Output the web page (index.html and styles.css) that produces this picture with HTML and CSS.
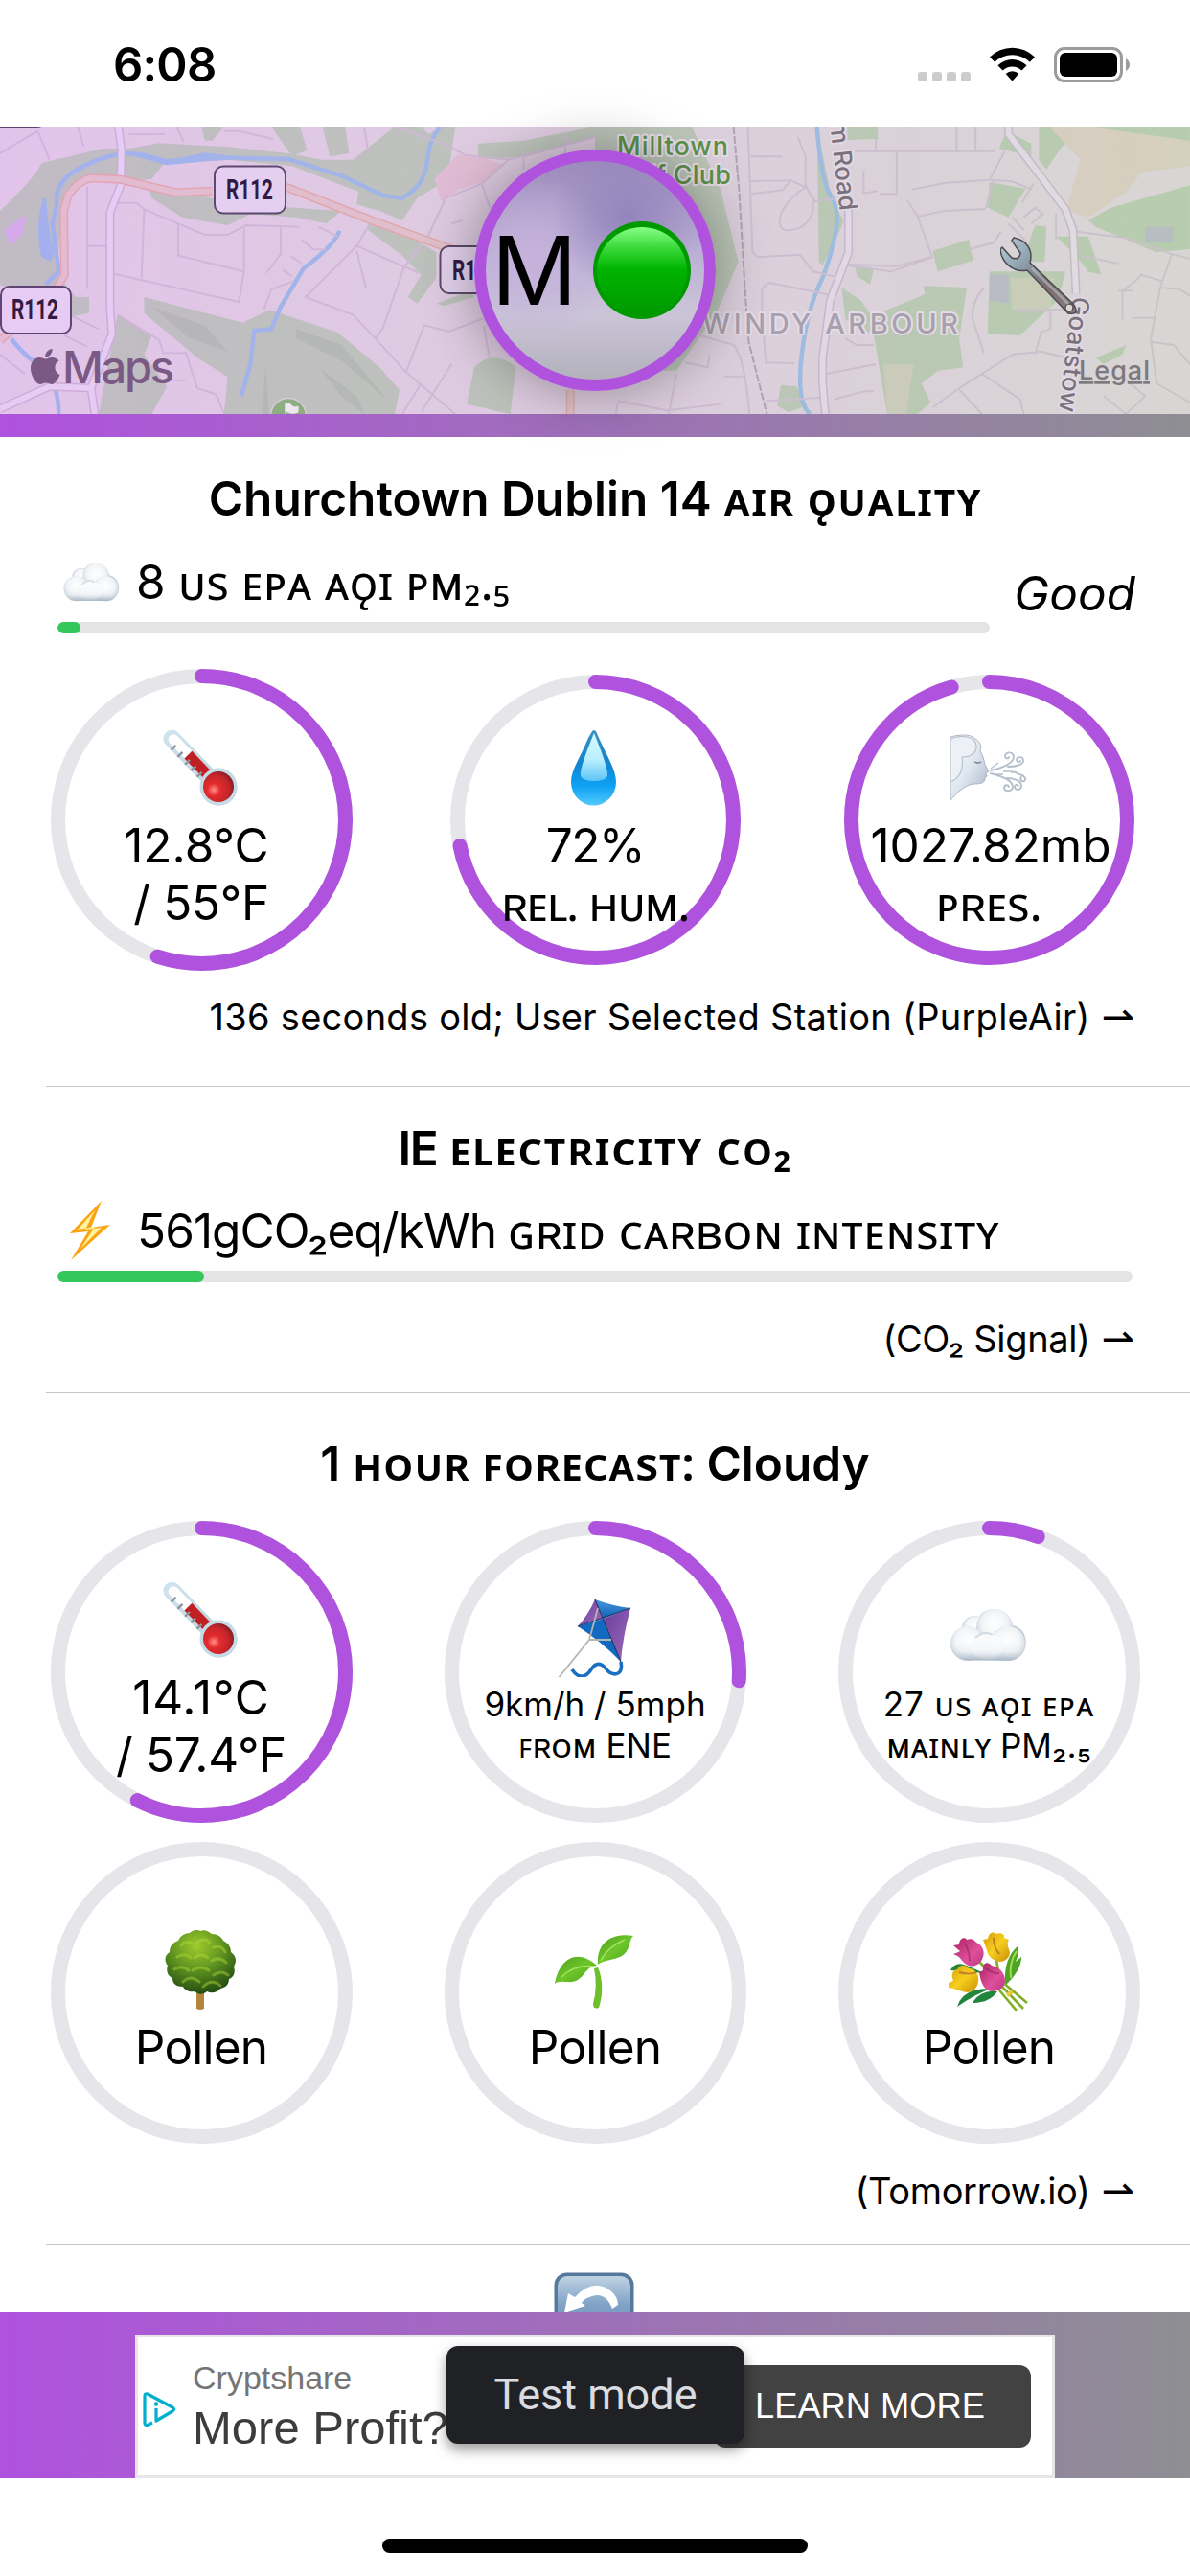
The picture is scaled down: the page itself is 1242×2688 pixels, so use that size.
FILE: index.html
```html
<!DOCTYPE html>
<html lang="en">
<head>
<meta charset="utf-8">
<title>Air Quality</title>
<link rel="stylesheet" href="styles.css">
</head>
<body>
<svg class="defs" width="0" height="0" aria-hidden="true">
  <defs>
    <radialGradient id="bulb" cx=".35" cy=".6" r=".7"><stop offset="0" stop-color="#ff8f8a"/><stop offset=".3" stop-color="#e32a2c"/><stop offset=".7" stop-color="#c4262b"/><stop offset="1" stop-color="#7c1d22"/></radialGradient>
    <linearGradient id="glass" x1="0" y1="0" x2="0" y2="1"><stop offset="0" stop-color="#cfe4ee"/><stop offset="1" stop-color="#b9ced8"/></linearGradient>
    <linearGradient id="dropOuter" x1="0" y1="0" x2="0" y2="1"><stop offset="0" stop-color="#3c93c4"/><stop offset=".45" stop-color="#1183cf"/><stop offset=".75" stop-color="#0fa3f5"/><stop offset="1" stop-color="#55c8fb"/></linearGradient>
    <linearGradient id="dropInner" x1="0" y1="0" x2="0" y2="1"><stop offset="0" stop-color="#d8fbff"/><stop offset=".55" stop-color="#b9effe"/><stop offset="1" stop-color="#5cc4f8"/></linearGradient>
    <radialGradient id="puff" cx=".5" cy=".4" r=".6"><stop offset="0" stop-color="#ffffff"/><stop offset=".6" stop-color="#f1f4f7"/><stop offset="1" stop-color="#becad5"/></radialGradient>
    <linearGradient id="cloudBase" x1="0" y1="0" x2="0" y2="1"><stop offset="0" stop-color="#ffffff" stop-opacity="0"/><stop offset=".6" stop-color="#e6ebf0" stop-opacity=".3"/><stop offset="1" stop-color="#a9b8c5"/></linearGradient>
    <linearGradient id="leaf" x1="0" y1="0" x2="1" y2="1"><stop offset="0" stop-color="#4f9e1c"/><stop offset=".5" stop-color="#6cc62a"/><stop offset="1" stop-color="#4c9c1a"/></linearGradient>
    <radialGradient id="crown" cx=".45" cy=".25" r=".75"><stop offset="0" stop-color="#9fcb2c"/><stop offset=".5" stop-color="#5f9320"/><stop offset="1" stop-color="#234d12"/></radialGradient>
    <linearGradient id="kiteBlue" x1="0" y1="0" x2="0" y2="1"><stop offset="0" stop-color="#4a97dc"/><stop offset="1" stop-color="#0c62b8"/></linearGradient>
    <linearGradient id="kitePurple" x1="0" y1="0" x2="1" y2="1"><stop offset="0" stop-color="#6a3d98"/><stop offset="1" stop-color="#9c6cc0"/></linearGradient>
    <linearGradient id="bolt" x1="0" y1="0" x2="1" y2="1"><stop offset="0" stop-color="#ff9f0a"/><stop offset="1" stop-color="#f7a81b"/></linearGradient>
    <linearGradient id="rosePink" x1="0" y1="0" x2="1" y2="1"><stop offset="0" stop-color="#a5245f"/><stop offset=".6" stop-color="#e04f9c"/><stop offset="1" stop-color="#b43a80"/></linearGradient>
    <linearGradient id="roseGold" x1="0" y1="0" x2="1" y2="1"><stop offset="0" stop-color="#d79a08"/><stop offset=".5" stop-color="#f6cf1d"/><stop offset="1" stop-color="#c98e09"/></linearGradient>
    <linearGradient id="face" x1="0" y1="0" x2="1" y2="1"><stop offset="0" stop-color="#ffffff"/><stop offset=".5" stop-color="#dfe6ef"/><stop offset="1" stop-color="#a3b0c0"/></linearGradient>
    <linearGradient id="refreshTile" x1="0" y1="0" x2="0" y2="1"><stop offset="0" stop-color="#bfd2e3"/><stop offset=".4" stop-color="#7fa2c6"/><stop offset="1" stop-color="#6488b0"/></linearGradient>
    <linearGradient id="ledBody" x1="0" y1="0" x2="0" y2="1"><stop offset="0" stop-color="#86ff86"/><stop offset=".22" stop-color="#3fdc3f"/><stop offset=".48" stop-color="#00b400"/><stop offset="1" stop-color="#009800"/></linearGradient>
    <linearGradient id="steel" x1="0" y1="0" x2="1" y2="1"><stop offset="0" stop-color="#b9d0dd"/><stop offset=".3" stop-color="#8fa3b0"/><stop offset=".6" stop-color="#7a6a6c"/><stop offset="1" stop-color="#8d7f82"/></linearGradient>
    <symbol id="thermometer" viewBox="0 0 84 80">
      <g transform="rotate(-44 61 60)">
        <path d="M53 45V-9a9 9 0 0 1 18 0V45a19 19 0 1 1-18 0z" transform="translate(-1 -1)" fill="url(#glass)"/>
        <path d="M56 44V-8a5 5 0 0 1 11 0V44z" fill="#fff"/>
        <rect x="56" y="14" width="11" height="34" fill="#c01f24"/>
        <path d="M52-2h7M52 8h7M52 19h7M52 28h7M52 37h7" stroke="#8d9499" stroke-width="2.400"/>
      </g>
      <circle cx="61" cy="60" r="19.500" fill="#c5dbe6"/>
      <circle cx="61" cy="60" r="16" fill="url(#bulb)"/>
    </symbol>
    <symbol id="drop" viewBox="0 0 84 80">
      <path d="M42 1c2 0 3 3 5 8 8 18 18 33 18 46a23 24 0 0 1-47 0c0-13 11-28 18-46 3-5 4-8 6-8z" fill="url(#dropOuter)"/>
      <path d="M42 4c4 10 15 36 14 44-1 8-27 8-28 0-1-8 10-34 14-44z" fill="url(#dropInner)"/>
    </symbol>
    <symbol id="cloud" viewBox="0 0 82 56">
      <path d="M21 54a20 18 0 0 1-7-34c1-9 10-14 18-11C38-2 62-3 67 18c20 4 18 36-4 37z" fill="#c3ced8"/>
      <circle cx="28" cy="22" r="13.500" fill="url(#puff)"/>
      <circle cx="48" cy="20" r="19" fill="url(#puff)"/>
      <circle cx="20" cy="37" r="18" fill="url(#puff)"/>
      <circle cx="62" cy="37" r="18" fill="url(#puff)"/>
      <ellipse cx="40" cy="40" rx="17" ry="14" fill="#f8fafb"/>
      <path d="M28 31q9-8 18-3" fill="none" stroke="#d3dbe2" stroke-width="2"/>
      <path d="M3 30Q2 54 21 54.500h42Q80 54 80 30z" fill="url(#cloudBase)"/>
    </symbol>
    <symbol id="wind" viewBox="0 0 84 80">
      <path d="M3 8c8-2 20-4 26 2 7 4 6 10 5 13 3 4 4 9 5 14l4 7-3 2 1 3-2 2c0 5-4 6-12 6-9 1-18 10-24 17z" fill="url(#face)" stroke="#aab6c4" stroke-width="1"/>
      <path d="M3 10c12-5 28-3 27 10-2 9-11 9-15 9 2 12-2 22-12 26z" fill="#edf1f6" stroke="#b6c1cf" stroke-width="1.200"/>
      <path d="M28 34q4 2 7 0" stroke="#8290a2" stroke-width="1.800" fill="none"/>
      <path d="M45 43c10-2 24-7 24-14 0-6-9-6-9-1 0 3 4 3 4 1M63 39c8 0 16-2 16-6 0-5-7-5-7-1 0 2 3 3 4 1M45 46c12 3 23 7 23 14 0 5-9 6-9 1 0-3 4-4 5-1M62 51c8 0 15 3 15 8 0 5-7 5-7 1 0-2 3-3 4-1M67 45c2-2 5 1 8 2 5 1 8 5 5 7-3 1-5-2-3-4" fill="none" stroke="#b6c0cd" stroke-width="1.900" stroke-linecap="round"/>
      <path d="M45 41l8-6M58 44h9M51 47l7 0" stroke="#b6c0cd" stroke-width="1.400"/>
    </symbol>
    <symbol id="kite" viewBox="0 0 84 82">
      <path d="M43 1Q62 8 80 10L52 21z" fill="url(#kiteBlue)"/>
      <path d="M43 1Q36 17 25 29L52 21z" fill="url(#kitePurple)"/>
      <path d="M25 29Q50 45 70 66L52 21z" fill="#1169c0"/>
      <path d="M80 10Q72 40 70 66L52 21z" fill="url(#kitePurple)"/>
      <path d="M43 1L70 66M25 29L80 10" stroke="#233a6b" stroke-width="1.200"/>
      <path d="M46 10L37 43h23M37 43L4 84" stroke="#b5b5b5" stroke-width="1.800" fill="none"/>
      <path d="M19 74c7 11 15 8 20 0s11-7 16 0 18 8 15-8" stroke="#1b6fc2" stroke-width="3.600" fill="none"/>
    </symbol>
    <symbol id="tree" viewBox="0 0 84 84">
      <path d="M38 66h8v16q-4 2-8 0z" fill="#b5843c"/>
      <path d="M42 1c5-2 9 1 12 3 6 0 10 3 12 7 6 3 8 7 8 12 6 4 6 10 3 15 2 6 0 11-5 13 0 6-4 9-9 10-4 5-10 5-14 3-4 4-10 3-13 0-5 1-10-1-12-5-7 0-11-3-11-9-5-2-7-8-5-13-4-5-3-11 2-14 0-6 3-10 9-12 2-5 7-8 12-8 3-3 8-4 11-2z" fill="url(#crown)"/>
      <path d="M22 16q5-6 12-2M38 13q8-6 14 0M56 18q8-3 12 5M18 28q8-5 14 1M36 29q7-6 14 0M54 32q8-5 15 2M15 41q8-5 15 1M34 42q8-6 17 0M56 47q8-6 15 0M24 54q8-8 17 0M45 59q9-9 18-1" fill="none" stroke="#b1d93a" stroke-opacity=".45" stroke-width="3" stroke-linecap="round"/>
    </symbol>
    <symbol id="sprout" viewBox="0 0 84 84">
      <path d="M42 40q4 18-1 37 0 6 6 4c5-15 4-31-1-42z" fill="#6fbf2c"/>
      <path d="M1 56C5 32 23 17 45 37 30 38 33 56 13 54Q4 53 1 56z" fill="url(#leaf)"/>
      <path d="M46 36C44 14 60 2 83 6 78 10 81 20 71 27 64 31 52 31 46 36z" fill="url(#leaf)"/>
      <path d="M8 49Q22 35 43 38M49 32Q56 18 74 10" stroke="#a4e265" stroke-width="1.500" fill="none"/>
    </symbol>
    <symbol id="bouquet" viewBox="0 0 84 84">
      <path d="M60 58Q58 30 73 17q2 8-2 16 6-5 6-5 0 14-17 30z" fill="#4ca524"/>
      <path d="M66 50Q64 34 72 22" stroke="#a8dc4a" stroke-width="2" fill="none"/>
      <path d="M3 42Q8 32 20 37l18 8zM10 80Q16 60 46 61 30 66 10 80zM26 76Q34 62 52 64 44 76 26 76z" fill="#22853c"/>
      <path d="M50 58l22 26M55 57l24 25M57 54l26 22M50 25l3 18M32 32l6 6" stroke="#7fae24" stroke-width="2.600"/>
      <path d="M6 16l6-1c0-6 6-9 8-5 5-2 8 0 10 3 6 2 9 9 7 15-2 8-11 12-17 8C14 33 15 28 6 25q6-2 7-3z" fill="url(#rosePink)"/>
      <path d="M37 10l5-1c1-7 6-8 9-5 5-2 9 1 8 4l5 2c-3 5 0 9 1 13 0 7-8 12-14 9-6-2-9-6-10-11z" fill="url(#roseGold)"/>
      <path d="M1 55l5-2c-3-6 0-12 4-12 3-6 10-5 12-1 6 0 10 5 10 10 1 9-5 15-12 15-7-1-11-4-19-5z" fill="url(#roseGold)"/>
      <path d="M33 44l4-2c-1-8 5-10 9-5 8 1 14 8 14 16 0 7-7 11-14 11-7-1-11-7-13-20z" fill="url(#rosePink)"/>
      <path d="M18 14q5 8 5 18M48 8q0 10 6 17M12 44q10 3 18 0M40 40q8 6 14 5" stroke="#7b1a45" stroke-opacity=".4" stroke-width="2" fill="none"/>
      <path d="M62 68l6-4" stroke="#e6c83b" stroke-width="4"/>
    </symbol>
  </defs>
</svg>

<div class="phone">
  <div class="status">
    <span class="clock">6:08</span>
    <div class="indicators">
      <span class="dots"><i></i><i></i><i></i><i></i></span>
      <svg class="wifi" viewBox="0 0 47 36"><path d="M0 10.500a33.500 33.500 0 0 1 47 0l-5.200 5.300a26 26 0 0 0-36.600 0z"/><path d="M8.400 19.200a21.600 21.600 0 0 1 30.200 0l-5.200 5.300a14.200 14.200 0 0 0-19.800 0z"/><path d="M16.700 28a9.600 9.600 0 0 1 13.600 0l-6.800 7.500z"/></svg>
      <span class="battery"><b></b></span>
      <svg class="nub" viewBox="0 0 4 13"><path d="M0 0q4 2.500 4 6.500T0 13z"/></svg>
    </div>
  </div>

  <header class="hero">
    <svg class="map" viewBox="0 0 1242 300">
      <defs>
        <linearGradient id="tint" x1="0" y1="0" x2="1" y2="0"><stop offset="0" stop-color="#af52de"/><stop offset="1" stop-color="#8e8e93"/></linearGradient>
      </defs>
      <rect width="1242" height="300" fill="#f8f5ef"/>
      <g transform="scale(.396 .33333) translate(0 -396)" class="geo">
        <path class="park" d="M0 660Q90 560 110 510L270 465H340L420 448 600 460 760 480 850 500 930 500 1040 396H1110L1130 420 1160 396H1200L1180 560 1100 620 1060 690 1000 660 940 640 945 600 770 520 600 500 430 515 400 560 320 570 230 560 190 600 160 700 150 860 200 930 235 930 235 980 150 1000 0 890zM530 396H590L560 440H540zM715 396H790L810 470 770 490zM850 396H910L920 480 870 490zM390 580L640 640 900 660 860 700 780 680 660 670 600 705 480 680 400 620zM970 700L1080 740 1150 790 1150 870 1100 950 1075 930 1110 860 1060 800 970 720zM380 930L640 1010 710 970 890 1040 1000 1150 1053 1220 1040 1300H590L600 1180 520 1120 380 980zM310 985L400 1050 380 1110 440 1210 400 1296H260zM1250 1150Q1300 1090 1360 1150L1345 1296 1230 1265zM1260 450L1380 440 1568 396V430L1390 490 1260 500zM1150 950L1240 910 1250 930 1170 958z"/>
        <path d="M1145 560l60-75 70 10 50 20-40 50-80 30-40 40z" fill="#fbe0dc"/>
        <path d="M10 720l60-50-10 60-30 40z" fill="#e6cdf0"/>
        <path class="hill" d="M400 960L540 1020 600 1100 500 1060zM780 1030L900 1080 1020 1250 900 1130 780 1060zM840 1150L940 1240 960 1296 900 1240zM700 1150l10 146h-20z"/>
        <path class="water thick" d="M118 620Q95 700 112 800 140 830 138 780 125 740 118 620z"/>
        <path class="water thick" d="M340 480L440 508 540 482 620 494 540 500 440 512z"/>
        <path class="water river" d="M150 640Q140 560 230 515 300 470 380 485L440 505 540 492 760 498 900 550 1010 612 1060 620Q1120 580 1125 510T1160 396M150 640L138 700 155 850 120 890M895 722Q880 770 800 840L740 960 715 1030 670 1035 660 1140 636 1240M30 1060Q60 1110 130 1170 155 1230 155 1296"/>
        <path class="lane" d="M0 480L100 410M100 410l30 90M205 396l15 60M340 420h95M465 396l20 50M590 410h40l90 25M960 400l10 75M230 585V905M230 770h60M305 635h55l20 20 90 45 70 35h60l50-30 140 5M380 655L373 870M470 700V800L643 850V715M300 857L630 945 643 850M740 710V795L702 855M840 710l50 30M795 750l30 30 35 2M765 800l30 25M745 845l25 20M775 880L715 905 695 970M1040 396L1180 455 1225 485 1340 500 1568 430M1340 500L1270 575 1175 620 1130 735 1065 835 1010 1025 990 1060M1270 575L1300 680M980 690L940 770 805 930 930 985 990 1060 1070 1165 1200 1296M940 770L1105 855M940 785l25 120M1118 1018l65 20 110-50M1070 1165L1118 1018M1110 1200l-50 96M1190 1140l-80 150M1290 1120l-15-100M190 990l70 40M0 1110l65 60M170 1050l60 35M310 985l110 80 10 40 60 0 30 110 50 20 20 60M430 1190l60 0M1500 440l-10-10 0 60M1380 470v60M1190 700l30-10"/>
        <path class="road-edge" d="M312 396L320 470 318 580 290 665V960L295 1045 240 1215 130 1210 0 1280M240 1215L250 1296"/>
        <path class="road" d="M312 396L320 470 318 580 290 665V960L295 1045 240 1215 130 1210 0 1280M240 1215L250 1296"/>
        <path class="main-edge" d="M0 1065Q90 980 150 900L170 860 168 660 180 610Q210 560 245 557L318 562 465 603 560 598M753 585L980 690 1190 780M1503 1220V1296"/>
        <path class="main" d="M0 1065Q90 980 150 900L170 860 168 660 180 610Q210 560 245 557L318 562 465 603 560 598M753 585L980 690 1190 780M1503 1220V1296"/>
      </g>
      <g transform="translate(621 0) scale(.396 .33333) translate(0 -396)" class="geo">
        <path class="park" d="M0 396H255L330 590 378 820 320 980 215 1160 150 1160 0 900zM585 396L620 600 635 650 655 690 650 710 600 830 590 820zM665 396H745V435L665 438zM1040 570L1135 590 1090 680 1035 650zM890 785L985 750 997 815 903 850zM685 835L735 840 725 890 690 865zM865 895L980 900 960 1060 970 1150 905 1160 860 1200 885 1260 850 1296H770L735 1050 660 1000 650 900 700 940 730 990 870 920zM490 1205L530 1210 560 1270 510 1290 480 1270zM1170 396H1568V490L1440 430 1300 396 1230 460 1190 530 1170 500zM1085 410L1150 450 1150 490 1065 465zM1390 640L1568 580V780L1480 790 1320 710 1300 690 1360 650zM1160 705L1190 710 1185 820 1150 820 1140 770zM1215 740L1300 740 1335 860 1300 850 1260 790zM1320 1120L1400 1080 1390 1110 1340 1140zM1040 850L1240 850 1220 940 1120 1050 1035 1045z"/>
        <path d="M1200 400L1300 396 1568 440 1568 520 1440 540 1400 600 1300 680 1240 660 1280 500z" fill="#f4ecd0"/>
        <path d="M1040 860H1090V950L1040 940zM1450 710H1525V760H1450z" fill="#c9d3d6"/>
        <path d="M1095 870H1210L1200 970H1100zM760 1140H840L820 1296H770z" fill="#f2eecb" fill-opacity=".6"/>
        <path class="water river" d="M585 396Q595 560 620 610 645 650 635 720T600 870Q560 960 545 1110T567 1296"/>
        <path class="lane" d="M403 396L415 790 430 805 540 797 575 850 630 865M410 490h85M535 430l20 60v90l25 55M410 567l105-2 40 20 25 45 50-8M515 565l-20 30-85 12M555 585Q490 640 487 690T545 710Q580 680 575 635M685 473H1055M740 435v38M953 396v76M1003 396v76M795 473V607h-45M708 535v70l37-7M835 593l85-20 120-10 40-90M1040 563l60 5 50 25M1030 650L1050 563M850 678l70-18 110-6M823 627l27 50 40 130M665 830l115 20 110-45M665 828l130 5 95-30M985 780l65-20 20-35M440 960v-50q5-20 20-25l160 38M440 960l10 175 75 2M260 1045L365 1080Q395 1120 407 1296M237 1135l60 15 5-40M340 1178h50M215 1170l-15 90-5 36M60 1260l-5 36M60 1255l130 30 140-20M450 1255l145-10M610 1170l130-30M660 1060l30 20 45 0M630 1250l80-25 25 0M1125 635l30-60M1100 680l30 40M1130 680l30-30 20 20-30 30M1090 700l50 60M1215 670v80M1115 970h145M1025 900Q990 950 995 1000L1025 1105M1200 970v60l-25 10-15 70M890 1275L960 1215 1100 1110 1175 1100 1280 1130M960 1220l60 76M1020 1170l100 80 10 46M1280 800l100 25M1270 725L1400 745 1520 795 1568 810M1520 795L1490 900 1465 1060 1480 1200 1568 1260M1490 900l50 5 28 20M1390 1000v-90l30-25 20-25 55 20M1380 910h40M1415 995h60M1465 1070l60 10 43 60M1390 1180l60 60-50 56M1340 1240l60 56"/>
        <path class="rail" d="M365 396L380 600 395 900 405 1070 453 1296"/>
        <path class="road-edge" d="M1090 396V420L1180 560 1240 655 1260 720 1268 920M668 640V790L620 940 600 1120V1200L607 1296"/>
        <path class="road" d="M1090 396V420L1180 560 1240 655 1260 720 1268 920M668 640V790L620 940 600 1120V1200L607 1296"/>
      </g>
      <path class="shield" d="M-20 1H36q6 0 7-1"/>
      <g class="badge">
        <rect x="224" y="41.500" width="74" height="49" rx="9"/><rect x="1" y="167" width="73" height="49" rx="9"/><rect x="459.500" y="125" width="74" height="49" rx="9"/>
      </g>
      <rect width="1242" height="300" fill="url(#tint)" fill-opacity=".3"/>
      <circle cx="301" cy="302" r="18.500" fill="#8cae80" stroke="#d9cbdc" stroke-width="1.500"/>
      <path d="M298 289v14M298 290q5-2 7 2 4 2 6 0v6q-6 3-13-1z" fill="#efe6f2" stroke="#efe6f2" stroke-width="1"/>
      <g class="badge-text">
        <text x="236" y="76" textLength="49" lengthAdjust="spacingAndGlyphs">R112</text>
        <text x="12" y="201" textLength="49" lengthAdjust="spacingAndGlyphs">R112</text>
        <text x="472" y="160" textLength="49" lengthAdjust="spacingAndGlyphs">R112</text>
      </g>
      <text class="label park-label" x="644" y="30" textLength="116">Milltown</text>
      <text class="label park-label" x="641" y="60" textLength="122">Golf Club</text>
      <text class="label area" x="733" y="216" textLength="267">WINDY ARBOUR</text>
      <text class="label street" transform="translate(866 -4) rotate(83.500)" textLength="93">m Road</text>
      <text class="label street" transform="translate(1119 177) rotate(96.500)" textLength="121">Goatstow</text>
      <path class="brand" transform="translate(28.500 232) scale(1.560 1.540)" d="M12.152 6.896c-.948 0-2.415-1.078-3.960-1.040-2.040.027-3.910 1.183-4.961 3.014-2.117 3.675-.546 9.103 1.519 12.090 1.013 1.454 2.208 3.090 3.792 3.039 1.520-.065 2.090-.987 3.935-.987 1.831 0 2.350.987 3.960.948 1.637-.026 2.676-1.480 3.676-2.948 1.156-1.688 1.636-3.325 1.662-3.415-.039-.013-3.182-1.221-3.220-4.857-.026-3.040 2.480-4.494 2.597-4.559-1.429-2.090-3.623-2.324-4.390-2.376-2-.156-3.675 1.090-4.610 1.090zM15.530 3.830c.843-1.012 1.400-2.427 1.245-3.830-1.207.052-2.662.805-3.532 1.818-.780.896-1.454 2.338-1.273 3.714 1.338.104 2.715-.688 3.559-1.701"/>
      <text class="brand maps-word" x="65" y="268" textLength="117">Maps</text>
      <text class="legal" x="1126" y="264" textLength="74">Legal</text>
    </svg>
    <div class="stripe"></div>
    <svg class="wrench" viewBox="0 0 82 82"><path d="M2 11l10 11q8 3 9-5L12 4l2-3c12 2 21 12 17 26l45 43q8 12-5 10L28 35C14 38 1 27 0 13z" fill="url(#steel)" stroke="#4c4a50" stroke-width="1.500"/><circle cx="72" cy="74" r="4" fill="#dad7d5" stroke="#5b4d50" stroke-width="1.500"/><path d="M33 33l38 37" stroke="#c2cdd4" stroke-opacity=".5" stroke-width="3"/></svg>
    <div class="avatar">
      <span>M</span>
      <svg class="led" viewBox="0 0 102 102"><circle cx="51" cy="51" r="51" fill="#009a00"/><ellipse cx="51" cy="52" rx="47" ry="46" fill="url(#ledBody)"/></svg>
    </div>
  </header>

  <main class="feed">
    <section class="card air">
      <h2><span>Churchtown Dublin 14</span> <span class="sc wide">ᴀɪʀ ǫᴜᴀʟɪᴛʏ</span></h2>
      <div class="meter-row">
        <div class="meter">
          <p class="reading"><svg class="lead cloud-s"><use href="#cloud"/></svg><span>8</span><span class="sc label-aqi">ᴜs ᴇᴘᴀ ᴀǫɪ ᴘᴍ₂.₅</span></p>
          <div class="track"><i style="width:24px"></i></div>
        </div>
        <em>Good</em>
      </div>
      <div class="gauges">
        <div class="gauge">
          <svg class="dial" viewBox="0 0 315 315"><circle cx="157.500" cy="157.500" r="150"/><circle class="arc" cx="157.500" cy="157.500" r="150" pathLength="100" stroke-dasharray="55 100"/></svg>
          <svg class="emoji"><use href="#thermometer"/></svg>
          <p class="nudge">12.8°C</p><p class="snug">/ 55°F</p>
        </div>
        <div class="gauge">
          <svg class="dial" viewBox="0 0 315 315"><circle cx="157.500" cy="157.500" r="144"/><circle class="arc" cx="157.500" cy="157.500" r="144" pathLength="100" stroke-dasharray="72 100"/></svg>
          <svg class="emoji"><use href="#drop"/></svg>
          <p class="tight">72%</p><p class="sc tight">ʀᴇʟ. ʜᴜᴍ.</p>
        </div>
        <div class="gauge">
          <svg class="dial" viewBox="0 0 315 315"><circle cx="157.500" cy="157.500" r="144"/><circle class="arc" cx="157.500" cy="157.500" r="144" pathLength="100" stroke-dasharray="95.600 100"/></svg>
          <svg class="emoji"><use href="#wind"/></svg>
          <p class="shift">1027.82mb</p><p class="sc snug">ᴘʀᴇs.</p>
        </div>
      </div>
      <p class="source"><span class="spaced">136 seconds old; User Selected Station (PurpleAir)</span><span class="harpoon">⇀</span></p>
    </section>

    <section class="card power">
      <h2><span class="tight">IE</span> <span class="sc wider">ᴇʟᴇᴄᴛʀɪᴄɪᴛʏ ᴄᴏ₂</span></h2>
      <p class="reading"><svg class="lead bolt" viewBox="0 0 44 62"><path d="M34 0L1 34l19-2L2 62 43 25l-20 3z" fill="url(#bolt)"/><path d="M27 10L9 30l18-3L12 50 34 28l-17 2z" fill="#fff3a0"/></svg><span class="co2">561gCO₂eq/kWh</span><span class="sc label-grid">ɢʀɪᴅ ᴄᴀʀʙᴏɴ ɪɴᴛᴇɴsɪᴛʏ</span></p>
      <div class="track"><i style="width:153px"></i></div>
      <p class="source"><span class="snug">(CO₂ Signal)</span><span class="harpoon">⇀</span></p>
    </section>

    <section class="card forecast">
      <h2><span>1</span> <span class="sc">ʜᴏᴜʀ ꜰᴏʀᴇᴄᴀsᴛ:</span> <span>Cloudy</span></h2>
      <div class="gauges">
        <div class="gauge">
          <svg class="dial" viewBox="0 0 315 315"><circle cx="157.500" cy="157.500" r="150"/><circle class="arc" cx="157.500" cy="157.500" r="150" pathLength="100" stroke-dasharray="57.400 100"/></svg>
          <svg class="emoji"><use href="#thermometer"/></svg>
          <p class="wider">14.1°C</p><p class="snug">/ 57.4°F</p>
        </div>
        <div class="gauge compact">
          <svg class="dial" viewBox="0 0 315 315"><circle cx="157.500" cy="157.500" r="150"/><circle class="arc" cx="157.500" cy="157.500" r="150" pathLength="100" stroke-dasharray="26 100"/></svg>
          <svg class="emoji"><use href="#kite"/></svg>
          <p>9km/h / 5mph</p><p><span class="sc">ꜰʀᴏᴍ</span> ENE</p>
        </div>
        <div class="gauge compact">
          <svg class="dial" viewBox="0 0 315 315"><circle cx="157.500" cy="157.500" r="150"/><circle class="arc" cx="157.500" cy="157.500" r="150" pathLength="100" stroke-dasharray="5.500 100"/></svg>
          <svg class="emoji cloud-l"><use href="#cloud"/></svg>
          <p class="wider">27 <span class="sc">ᴜs ᴀǫɪ ᴇᴘᴀ</span></p><p><span class="sc">ᴍᴀɪɴʟʏ</span> PM₂.₅</p>
        </div>
        <div class="gauge pollen">
          <svg class="dial" viewBox="0 0 315 315"><circle cx="157.500" cy="157.500" r="150"/></svg>
          <svg class="emoji"><use href="#tree"/></svg>
          <p>Pollen</p>
        </div>
        <div class="gauge pollen">
          <svg class="dial" viewBox="0 0 315 315"><circle cx="157.500" cy="157.500" r="150"/></svg>
          <svg class="emoji"><use href="#sprout"/></svg>
          <p>Pollen</p>
        </div>
        <div class="gauge pollen">
          <svg class="dial" viewBox="0 0 315 315"><circle cx="157.500" cy="157.500" r="150"/></svg>
          <svg class="emoji"><use href="#bouquet"/></svg>
          <p>Pollen</p>
        </div>
      </div>
      <p class="source"><span class="snug">(Tomorrow.io)</span><span class="harpoon">⇀</span></p>
    </section>

    <div class="refresh">
      <svg viewBox="0 0 84 84"><rect x=".5" y=".5" width="83" height="83" rx="13" fill="#56789c"/><rect x="4" y="4" width="76" height="76" rx="10" fill="url(#refreshTile)"/><path d="M11 42L15 22 22 26Q42 5 60 20 67 26 67 34l-6 4Q54 20 40 25 32 27 29 32l4 3z" fill="#fff"/></svg>
    </div>
  </main>

  <footer class="ad-bar">
    <div class="ad">
      <svg class="choices" viewBox="0 0 34 36"><path d="M10 32L5 34.500Q2 35 2 32V4q0-3 3-2l26 14q3 2 0 4L14 30V17" fill="none" stroke="#00aecd" stroke-width="3.200" stroke-linejoin="round"/><circle cx="14" cy="12.500" r="2.200" fill="#00aecd"/></svg>
      <div class="copy"><span class="brand-name">Cryptshare</span><span class="pitch">More Profit?</span></div>
      <span class="cta"><b>LEARN MORE</b></span>
      <div class="toast"><span>Test mode</span></div>
    </div>
  </footer>
  <div class="home"><i></i></div>
</div>
</body>
</html>
```
FILE: styles.css
```css
* { box-sizing: border-box; }
body { margin: 0; background: #fff; color: #000; font-family: Inter, "Noto Sans", "DejaVu Sans", sans-serif; font-size: 49.5px; line-height: 60px; }
p, h2 { margin: 0; font: inherit; white-space: pre; }
.defs { position: absolute; }
.phone { width: 1242px; height: 2688px; display: flex; flex-direction: column; overflow: hidden; }

.status { height: 132px; flex: none; display: flex; justify-content: space-between; padding: 38px 63px 0 118px; }
.clock { font-size: 49px; font-weight: 600; letter-spacing: -.8px; }
.indicators { display: flex; height: 37px; margin-top: 11px; align-items: flex-start; }
.dots { display: flex; gap: 5px; margin: 26px 20px 0 0; }
.dots i { width: 10px; height: 10px; border-radius: 3px; background: #ccc; }
.wifi { width: 47px; height: 36px; margin-right: 20px; }
.battery { width: 72px; height: 37px; border: 3px solid #9b9b9b; border-radius: 11px; padding: 3px; display: flex; }
.battery b { flex: 1; background: #000; border-radius: 6px; }
.nub { width: 4px; height: 13px; margin: 12px 0 0 3px; fill: #9b9b9b; }

.hero { position: relative; flex: none; height: 324px; }
.map { display: block; width: 1242px; height: 300px; }
.geo path { vector-effect: non-scaling-stroke; }
.geo .park { fill: #c9e8ba; }
.geo .hill { fill: #bcdcae; }
.geo .lane { fill: none; stroke: #e3dbe0; stroke-width: 2; }
.geo .road-edge { fill: none; stroke: #dccfd8; stroke-width: 9; }
.geo .road { fill: none; stroke: #fff; stroke-width: 6; }
.geo .main-edge { fill: none; stroke: #fac5a2; stroke-width: 9; }
.geo .main { fill: none; stroke: #fae6cf; stroke-width: 6; }
.geo .water { stroke: #9fd8f6; }
.geo .thick { fill: #9fd8f6; stroke-width: 3; }
.geo .river { fill: none; stroke-width: 4.5; }
.geo .rail { fill: none; stroke: #b9b2bb; stroke-width: 2; stroke-dasharray: 8 2; }
.shield { fill: none; stroke: #3d3d46; stroke-width: 2; }
.badge rect { fill: #fff; stroke: #3d3d46; stroke-width: 2; }
.badge-text { font: 700 29px Roboto, sans-serif; fill: #321a44; }
.label { stroke: #e6dce8; stroke-width: 4px; paint-order: stroke; stroke-linejoin: round; font-weight: 500; }
.park-label { font-size: 27px; fill: #5c914a; }
.area { font-size: 29px; fill: #a8a0ac; }
.street { font-size: 26px; fill: #79727d; stroke-width: 3px; }
.brand { fill: #7a5a84; }
.maps-word { font-size: 47px; font-weight: 500; }
.legal { font-size: 27px; fill: #7c787d; text-decoration: underline; font-weight: 500; }
.stripe { height: 24px; background: linear-gradient(90deg, #af52de, #8e8e93); }
.wrench { position: absolute; left: 1044px; top: 115px; width: 82px; height: 82px; }
.avatar { position: absolute; left: 495px; top: 24px; width: 252px; height: 252px; border: 12px solid #af52de; border-radius: 50%; display: flex; align-items: center; justify-content: space-between; padding: 0 14px 0 6px;
  background: radial-gradient(circle at 65% 25%, #9384bd 0, #9384bd00 35%), radial-gradient(circle at 20% 45%, #c6b2dc 0, #c6b2dc00 40%), linear-gradient(#9c8abb, #bdb2d6 45%, #cbc5d8 70%, #b3b1bc);
  box-shadow: 0 0 60px rgba(0,0,0,.35); }
.avatar span { font-size: 99px; line-height: 120px; }
.led { width: 102px; height: 102px; flex: none; }

.feed { flex: none; height: 1956px; overflow: hidden; }
.card { padding: 34px 60px 0; }
.card::after { content: ""; display: block; height: 1px; background: #c6c6c8; margin: 32px -60px 0 -12px; }
.air::after { margin-top: 48px; }
h2 { text-align: center; font-weight: 600; }
.sc { font-family: "Noto Sans", "DejaVu Sans", sans-serif; font-size: 1em; }
p .sc, h2 .sc { line-height: 0; }
.tight { letter-spacing: -1.4px; }
.snug { letter-spacing: -.35px; }
.spaced { letter-spacing: .27px; }
.wide { letter-spacing: .5px; }
.wider { letter-spacing: .8px; }
.meter-row { display: grid; grid-template-columns: 973px 1fr; align-items: center; margin-top: 27px; }
.meter-row em { justify-self: end; margin-right: -3px; }
.reading { display: flex; align-items: center; height: 60px; }
.reading .sc { line-height: 60px; }
.lead { flex: none; }
.cloud-s { width: 60px; height: 41px; margin: 0 17px 0 5px; }
.bolt { width: 44px; height: 62px; margin: 0 27px 0 12px; }
.label-aqi { margin-left: 13px; }
.co2 { letter-spacing: -.95px; }
.label-grid { margin-left: 12px; letter-spacing: .2px; }
.track { height: 12px; margin-top: 12px; border-radius: 6px; background: #e4e4e5; overflow: hidden; }
.track i { display: block; height: 12px; border-radius: 6px; background: #34c759; }
.gauges { display: grid; grid-template-columns: repeat(3, 411px); justify-items: center; row-gap: 20px; margin: 37px -60px 0; justify-content: center; }
.gauge { position: relative; width: 315px; height: 315px; padding-top: 63px; display: flex; flex-direction: column; align-items: center; }
.dial { position: absolute; inset: 0; fill: none; stroke: #e5e5ea; stroke-width: 15; }
.dial .arc { stroke: #af52de; stroke-linecap: round; transform: rotate(-90deg); transform-origin: center; }
.gauge .emoji { width: 84px; height: 80px; margin: 0 3px 11px 0; flex: none; }
.gauge p { position: relative; }
.gauge .nudge { right: 5px; }
.gauge .shift { left: 2px; }
.gauge.compact { padding-top: 81px; font-size: 35px; line-height: 43px; }
.gauge.compact .emoji { height: 82px; margin-bottom: 7px; }
.gauge.compact .cloud-l { width: 82px; height: 56px; margin: 10px 3px 23px 0; }
.gauge.pollen { padding-top: 92px; letter-spacing: -.8px; }
.gauge.pollen .emoji { height: 84px; margin-bottom: 8px; }
.source { display: flex; justify-content: flex-end; gap: 12px; font-size: 38px; line-height: 48px; margin-top: 24px; }
.harpoon { font-family: "DejaVu Sans", sans-serif; font-size: 41px; margin-right: -2px; }
.power .reading { margin-top: 26px; }
.power .source { margin-top: 35px; }
.forecast { padding-top: 43px; }
.forecast .gauges { margin-top: 30px; }
.forecast .source { margin-top: 25px; }
.refresh { padding-top: 28px; display: flex; justify-content: center; }
.refresh svg { width: 84px; height: 84px; margin-right: 3px; }

.ad-bar { flex: none; height: 174px; background: linear-gradient(90deg, #af52de, #8e8e93); padding: 24px 141px 0; }
.ad { position: relative; height: 150px; background: #fff; border: 3px solid #e6e6e9; display: flex; align-items: center; padding-left: 5px; font-family: "Liberation Sans", Arial, sans-serif; }
.choices { width: 34px; height: 36px; margin-top: 6px; }
.copy { display: flex; flex-direction: column; margin-left: 18px; }
.brand-name { font-size: 34px; line-height: 44px; color: #757575; }
.pitch { font-size: 49px; line-height: 60px; color: #3c3c3c; }
.cta { width: 331px; height: 86px; margin-left: auto; margin-right: 22px; border-radius: 12px; background: #424242; color: #fff; display: flex; align-items: center; justify-content: flex-end; padding-right: 48px; }
.cta b { font-weight: 400; font-size: 36.3px; line-height: 44px; }
.toast { position: absolute; left: 322px; top: 9px; width: 311px; height: 102px; border-radius: 12px; background: #202125; color: #dadce0; display: flex; align-items: center; justify-content: center; font: 45px/52px Roboto, sans-serif; box-shadow: 0 6px 14px rgba(0,0,0,.4); }
.home { flex: 1; display: flex; justify-content: center; padding-top: 63px; }
.home i { width: 444px; height: 15px; border-radius: 8px; background: #000; }
```
